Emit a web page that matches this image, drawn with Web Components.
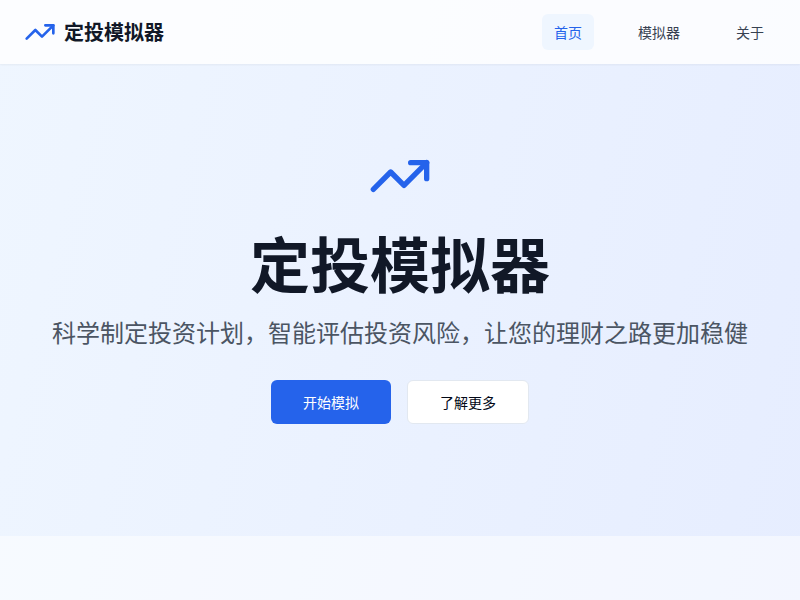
<!DOCTYPE html>
<html lang="zh-CN">
<head>
  <meta charset="UTF-8">
  <meta name="viewport" content="width=device-width, initial-scale=1.0">
  <title>定投模拟器</title>
  <style>
    body {
      margin: 0;
      min-height: 100vh;
      font-family: "Noto Sans CJK SC", "Liberation Sans", sans-serif;
      font-size: 16px;
      line-height: 24px;
      color: #111827;
      background: linear-gradient(103deg, #eff6ff, #e0e7ff 170%);
    }
  </style>
</head>
<body>
  <site-navbar>
    <nav-link href="#home" active>首页</nav-link>
    <nav-link href="#simulator">模拟器</nav-link>
    <nav-link href="#about">关于</nav-link>
  </site-navbar>
  <main>
    <hero-section>
      <span slot="title">定投模拟器</span>
      <span slot="subtitle">科学制定投资计划，智能评估投资风险，让您的理财之路更加稳健</span>
      <action-button slot="actions" primary>开始模拟</action-button>
      <action-button slot="actions">了解更多</action-button>
    </hero-section>
    <features-section></features-section>
  </main>

  <script>
    class TrendIcon extends HTMLElement {
      connectedCallback() {
        this.attachShadow({ mode: 'open' });
        this.shadowRoot.innerHTML = `
          <style>
            :host {
              display: block;
              width: var(--icon-size, 32px);
              height: var(--icon-size, 32px);
              color: #2563eb;
            }

            svg {
              display: block;
              width: 100%;
              height: 100%;
            }
          </style>
          <svg viewBox="0 0 24 24" fill="none" stroke="currentColor" stroke-width="2" stroke-linecap="round" stroke-linejoin="round" aria-hidden="true">
            <path d="M22 7 13.5 15.5 8.5 10.5 2 17"/>
            <path d="M16 7h6v6"/>
          </svg>
        `;
      }
    }

    class NavLink extends HTMLElement {
      connectedCallback() {
        this.attachShadow({ mode: 'open' });
        this.shadowRoot.innerHTML = `
          <style>
            :host {
              display: block;
            }

            a {
              display: block;
              padding: 8px 12px;
              border-radius: 6px;
              font-size: 14px;
              line-height: 20px;
              color: #374151;
              text-decoration: none;
            }

            a:hover,
            :host([active]) a {
              color: #2563eb;
              background: #eff6ff;
            }
          </style>
          <a href="${this.getAttribute('href')}"><slot></slot></a>
        `;
      }
    }

    class SiteNavbar extends HTMLElement {
      connectedCallback() {
        this.attachShadow({ mode: 'open' });
        this.shadowRoot.innerHTML = `
          <style>
            :host {
              display: block;
              position: sticky;
              top: 0;
              z-index: 10;
              background: rgba(255, 255, 255, 0.8);
              box-shadow: 0 1px 2px rgba(0, 0, 0, 0.05);
            }

            header {
              display: flex;
              align-items: center;
              justify-content: space-between;
              max-width: 1280px;
              height: 64px;
              margin: 0 auto;
              padding: 0 24px;
            }

            .logo {
              display: flex;
              align-items: center;
              gap: 8px;
              font-size: 20px;
              line-height: 28px;
              font-weight: 700;
              color: #111827;
              text-decoration: none;
            }

            nav {
              display: flex;
              gap: 32px;
            }
          </style>
          <header>
            <a href="#home" class="logo"><trend-icon></trend-icon>定投模拟器</a>
            <nav><slot></slot></nav>
          </header>
        `;
      }
    }

    class ActionButton extends HTMLElement {
      connectedCallback() {
        this.attachShadow({ mode: 'open' });
        this.shadowRoot.innerHTML = `
          <style>
            :host {
              display: block;
            }

            button {
              height: 44px;
              padding: 0 32px;
              border: 1px solid #e2e8f0;
              border-radius: 6px;
              background: #ffffff;
              color: #020817;
              font: inherit;
              font-size: 14px;
              line-height: 20px;
              cursor: pointer;
            }

            :host([primary]) button {
              border: none;
              background: #2563eb;
              color: #ffffff;
            }
          </style>
          <button type="button"><slot></slot></button>
        `;
      }
    }

    class HeroSection extends HTMLElement {
      connectedCallback() {
        this.attachShadow({ mode: 'open' });
        this.shadowRoot.innerHTML = `
          <style>
            :host {
              display: block;
              padding: 80px 24px 112px;
              text-align: center;
            }

            trend-icon {
              --icon-size: 64px;
              margin: 0 auto 24px;
            }

            h1 {
              margin: 0 0 24px;
              font-size: 60px;
              line-height: 60px;
              font-weight: 700;
            }

            p {
              margin: 0 0 32px;
              font-size: 24px;
              line-height: 32px;
              color: #4b5563;
            }

            .actions {
              display: flex;
              flex-wrap: wrap;
              justify-content: center;
              gap: 16px;
            }
          </style>
          <trend-icon></trend-icon>
          <h1><slot name="title"></slot></h1>
          <p><slot name="subtitle"></slot></p>
          <div class="actions"><slot name="actions"></slot></div>
        `;
      }
    }

    class FeaturesSection extends HTMLElement {
      connectedCallback() {
        this.attachShadow({ mode: 'open' });
        this.shadowRoot.innerHTML = `
          <style>
            :host {
              display: block;
              padding-top: 64px;
              background: rgba(255, 255, 255, 0.5);
            }
          </style>
          <slot></slot>
        `;
      }
    }

    customElements.define('trend-icon', TrendIcon);
    customElements.define('nav-link', NavLink);
    customElements.define('site-navbar', SiteNavbar);
    customElements.define('action-button', ActionButton);
    customElements.define('hero-section', HeroSection);
    customElements.define('features-section', FeaturesSection);
  </script>
</body>
</html>
